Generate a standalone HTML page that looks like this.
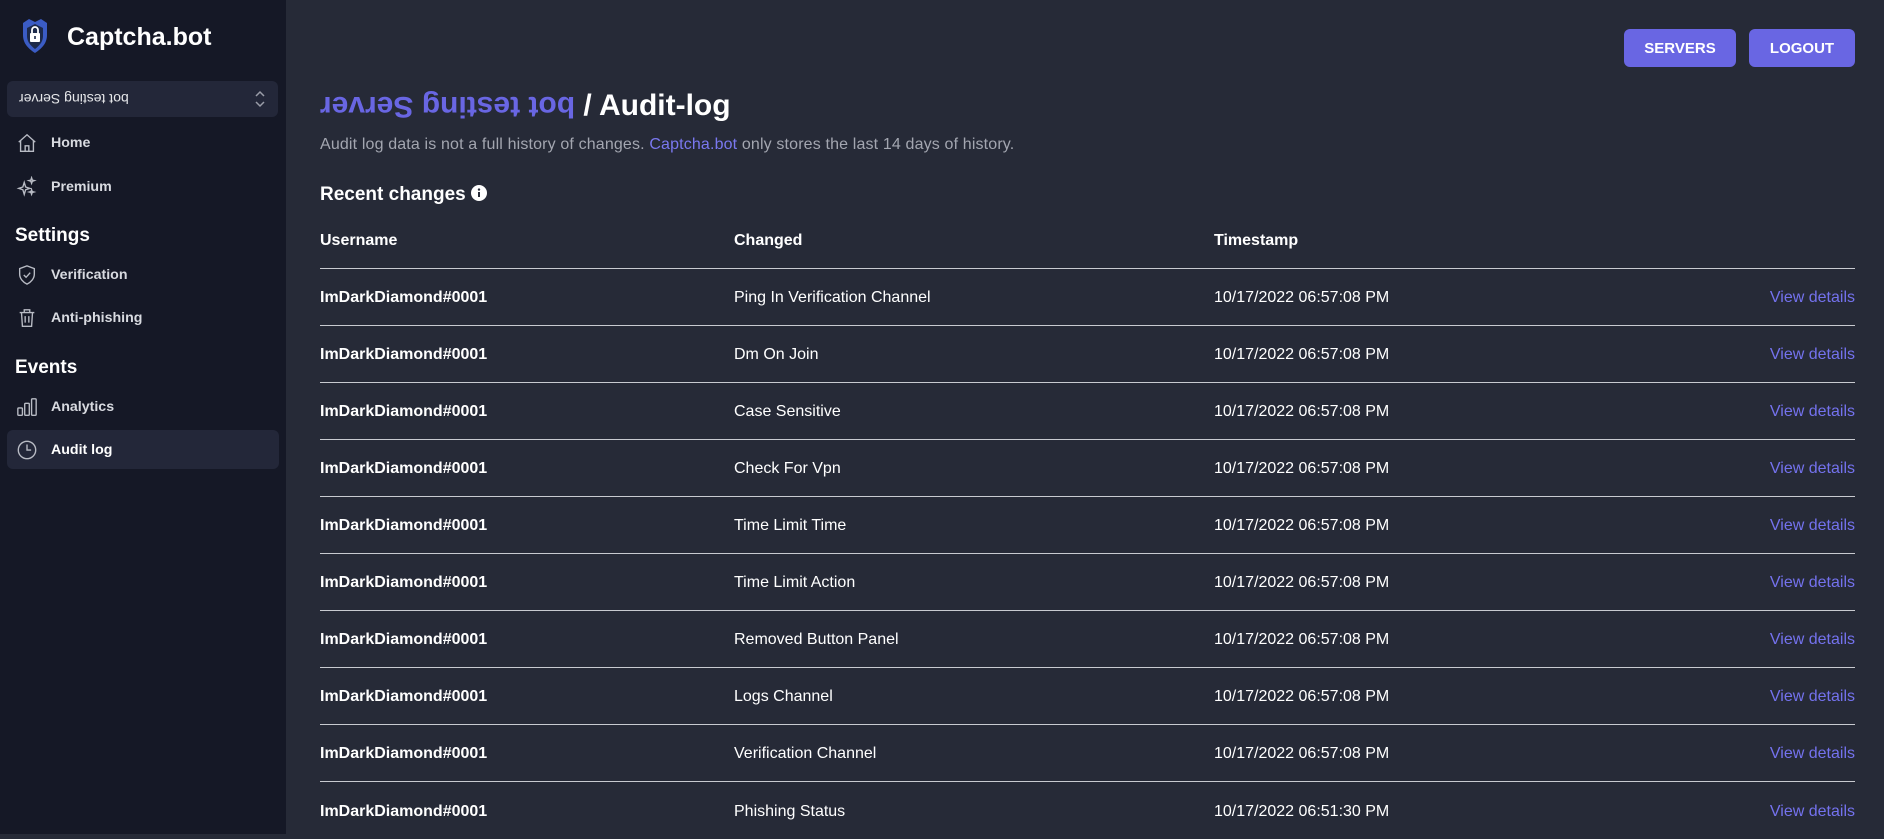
<!DOCTYPE html>
<html><head><meta charset="utf-8"><style>
*{box-sizing:border-box;margin:0;padding:0}
body{width:1884px;height:834px;overflow:hidden;background:#262a37;font-family:"Liberation Sans",sans-serif;color:#fff;position:relative}
.sb{position:absolute;left:0;top:0;width:286px;height:834px;background:#151826}
.logo{position:absolute;left:20px;top:18px}
.brand{position:absolute;left:67px;top:23px;font-size:25px;font-weight:bold}
.sel{position:absolute;left:7px;top:81px;width:271px;height:36px;background:#232739;border-radius:6px;font-size:14px;color:#e6e7ea}
.sel span{position:absolute;left:12px;top:10px;display:inline-block;transform:rotate(180deg)}
.sel svg{position:absolute;right:12px;top:9px}
.nav{position:absolute;left:7px;width:272px;height:39px;border-radius:6px;font-size:14.2px;font-weight:bold;color:#d8dae0}
.nav svg{position:absolute;left:9px;top:9px}
.nav span{position:absolute;left:44px;top:12px}
.act{background:#232739;color:#fff}
.sec{position:absolute;left:15px;font-size:19px;font-weight:bold}
.btn{position:absolute;top:29px;height:38px;background:#6966e3;border-radius:6px;font-size:15px;font-weight:bold;text-align:center;line-height:39px}
h1{position:absolute;left:320px;top:89px;font-size:30px;font-weight:bold;white-space:nowrap}
.flip{color:#6966e3;display:inline-block;transform:rotate(180deg)}
.sub{position:absolute;left:320px;top:136px;font-size:16px;color:#a3a6b0;letter-spacing:0.15px}
.sub a{color:#7a78f0}
.rc{position:absolute;left:320px;top:184px;font-size:19px;font-weight:bold}
.row{position:absolute;left:320px;width:1535px;height:57px;border-bottom:1px solid #c8cad0;font-size:16px}
.row.last{border-bottom:none}
.row div{position:absolute;top:50%;transform:translateY(-45%);white-space:nowrap}
.c1{left:0;font-weight:bold}.c2{left:414px}.c3{left:894px}.c4{right:0;color:#7472ee}
.hd div{font-weight:bold}
</style></head><body>
<div class="sb">
<svg class="logo" width="30" height="36" viewBox="0 0 30 36"><path d="M3 5 L9 1 L15 4 L21 1 L27 5 L27 17 C27 26 21 31 15 35 C9 31 3 26 3 17Z" fill="#3b5cc4"/><path d="M7 10 L15 6 L23 10 L23 18 C23 24 19 28 15 31 C11 28 7 24 7 18Z" fill="#1d2a4a"/><rect x="10" y="15" width="10" height="9" rx="1" fill="#fff"/><path d="M12 15 V12 a3 3 0 0 1 6 0 V15" stroke="#fff" stroke-width="1.8" fill="none"/><rect x="14.2" y="18" width="1.6" height="3" fill="#1d2a4a"/></svg>
<div class="brand">Captcha.bot</div>
<div class="sel"><span>bot testing Server</span><svg width="12" height="18" viewBox="0 0 12 18" fill="none" stroke="#9a9da8" stroke-width="1.5"><path d="M2 6 L6 2 L10 6M2 12 L6 16 L10 12"/></svg></div>
<div class="nav" style="top:123px"><svg width="22" height="22" viewBox="0 0 24 24" fill="none" stroke="#b8bbc4" stroke-width="1.5"><path d="M3 11 L12 3 L21 11 M5 9 V21 H19 V9 M10 21 V15 H14 V21"/></svg><span>Home</span></div>
<div class="nav" style="top:167px"><svg width="22" height="22" viewBox="0 0 24 24" fill="none" stroke="#b8bbc4" stroke-width="1.5"><path d="M9 7 L10.5 12 L15 13.5 L10.5 15 L9 20 L7.5 15 L3 13.5 L7.5 12Z M17 2 L17.8 4.5 L20 5 L17.8 5.8 L17 8 L16.2 5.8 L14 5 L16.2 4.5Z M17 15 L17.7 17 L19.5 17.5 L17.7 18 L17 20 L16.3 18 L14.5 17.5 L16.3 17Z"/></svg><span>Premium</span></div>
<div class="sec" style="top:225px">Settings</div>
<div class="nav" style="top:255px"><svg width="22" height="22" viewBox="0 0 24 24" fill="none" stroke="#b8bbc4" stroke-width="1.5"><path d="M12 2 L20 5 V11 C20 16 16 20 12 22 C8 20 4 16 4 11 V5Z M8.5 12 L11 14.5 L15.5 9.5"/></svg><span>Verification</span></div>
<div class="nav" style="top:298px"><svg width="22" height="22" viewBox="0 0 24 24" fill="none" stroke="#b8bbc4" stroke-width="1.5"><path d="M4 6 H20 M9 6 V3 H15 V6 M6 6 L7 21 H17 L18 6 M10 10 V17 M14 10 V17"/></svg><span>Anti-phishing</span></div>
<div class="sec" style="top:357px">Events</div>
<div class="nav" style="top:387px"><svg width="22" height="22" viewBox="0 0 24 24" fill="none" stroke="#b8bbc4" stroke-width="1.5"><rect x="2" y="13" width="5" height="8" rx="1"/><rect x="9.5" y="8" width="5" height="13" rx="1"/><rect x="17" y="3" width="5" height="18" rx="1"/></svg><span>Analytics</span></div>
<div class="nav act" style="top:430px"><svg width="22" height="22" viewBox="0 0 24 24" fill="none" stroke="#b8bbc4" stroke-width="1.5"><circle cx="12" cy="12" r="9.5"/><path d="M12 6 V12 H16.5"/></svg><span>Audit log</span></div>
</div>
<div class="btn" style="left:1624px;width:112px">SERVERS</div>
<div class="btn" style="left:1749px;width:106px">LOGOUT</div>
<h1><span class="flip">bot testing Server</span> / Audit-log</h1>
<div class="sub">Audit log data is not a full history of changes. <a>Captcha.bot</a> only stores the last 14 days of history.</div>
<div class="rc">Recent changes <svg width="16" height="16" viewBox="0 0 16 16" style="vertical-align:-1px"><circle cx="8" cy="8" r="8" fill="#fff"/><rect x="7" y="7" width="2" height="5" fill="#262a37"/><circle cx="8" cy="4.6" r="1.2" fill="#262a37"/></svg></div>
<div class="row hd" style="top:212px"><div class="c1">Username</div><div class="c2">Changed</div><div class="c3">Timestamp</div></div>
<div class="row" style="top:269px"><div class="c1">ImDarkDiamond#0001</div><div class="c2">Ping In Verification Channel</div><div class="c3">10/17/2022 06:57:08 PM</div><div class="c4">View details</div></div>
<div class="row" style="top:326px"><div class="c1">ImDarkDiamond#0001</div><div class="c2">Dm On Join</div><div class="c3">10/17/2022 06:57:08 PM</div><div class="c4">View details</div></div>
<div class="row" style="top:383px"><div class="c1">ImDarkDiamond#0001</div><div class="c2">Case Sensitive</div><div class="c3">10/17/2022 06:57:08 PM</div><div class="c4">View details</div></div>
<div class="row" style="top:440px"><div class="c1">ImDarkDiamond#0001</div><div class="c2">Check For Vpn</div><div class="c3">10/17/2022 06:57:08 PM</div><div class="c4">View details</div></div>
<div class="row" style="top:497px"><div class="c1">ImDarkDiamond#0001</div><div class="c2">Time Limit Time</div><div class="c3">10/17/2022 06:57:08 PM</div><div class="c4">View details</div></div>
<div class="row" style="top:554px"><div class="c1">ImDarkDiamond#0001</div><div class="c2">Time Limit Action</div><div class="c3">10/17/2022 06:57:08 PM</div><div class="c4">View details</div></div>
<div class="row" style="top:611px"><div class="c1">ImDarkDiamond#0001</div><div class="c2">Removed Button Panel</div><div class="c3">10/17/2022 06:57:08 PM</div><div class="c4">View details</div></div>
<div class="row" style="top:668px"><div class="c1">ImDarkDiamond#0001</div><div class="c2">Logs Channel</div><div class="c3">10/17/2022 06:57:08 PM</div><div class="c4">View details</div></div>
<div class="row" style="top:725px"><div class="c1">ImDarkDiamond#0001</div><div class="c2">Verification Channel</div><div class="c3">10/17/2022 06:57:08 PM</div><div class="c4">View details</div></div>
<div class="row last" style="top:782px"><div class="c1">ImDarkDiamond#0001</div><div class="c2">Phishing Status</div><div class="c3">10/17/2022 06:51:30 PM</div><div class="c4">View details</div></div>
</body></html>
